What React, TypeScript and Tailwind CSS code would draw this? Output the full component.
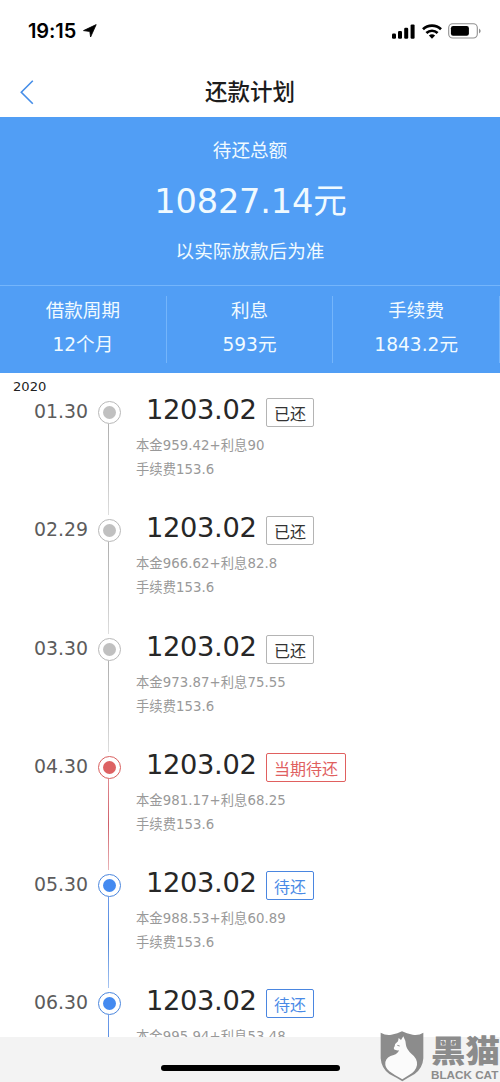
import clsx from 'clsx'

type Status = 'paid' | 'current' | 'pending'

interface Installment {
  date: string
  amount: string
  principal: string
  interest: string
  fee: string
  status: Status
}

const installments: Installment[] = [
  { date: '01.30', amount: '1203.02', principal: '959.42', interest: '90', fee: '153.6', status: 'paid' },
  { date: '02.29', amount: '1203.02', principal: '966.62', interest: '82.8', fee: '153.6', status: 'paid' },
  { date: '03.30', amount: '1203.02', principal: '973.87', interest: '75.55', fee: '153.6', status: 'paid' },
  { date: '04.30', amount: '1203.02', principal: '981.17', interest: '68.25', fee: '153.6', status: 'current' },
  { date: '05.30', amount: '1203.02', principal: '988.53', interest: '60.89', fee: '153.6', status: 'pending' },
  { date: '06.30', amount: '1203.02', principal: '995.94', interest: '53.48', fee: '153.6', status: 'pending' },
]

const summary = [
  { label: '借款周期', value: '12个月' },
  { label: '利息', value: '593元' },
  { label: '手续费', value: '1843.2元' },
]

const statusStyles = {
  paid: {
    label: '已还',
    tag: 'border-[#b4b4b4] text-[#333333]',
    ring: 'border-[#b8b8b8]',
    dot: 'bg-[#c0c0c0]',
    line: 'from-[#b0b0b0] via-[#c2c2c2] to-[#dedede]',
  },
  current: {
    label: '当期待还',
    tag: 'border-[#e0605f] text-[#e0605f]',
    ring: 'border-[#d9605f]',
    dot: 'bg-[#dd6263]',
    line: 'from-[#e08a90] via-[#cf5f6a] to-[#e9b5b9]',
  },
  pending: {
    label: '待还',
    tag: 'border-[#4a86e0] text-[#4a8ae6]',
    ring: 'border-[#4a86de]',
    dot: 'bg-[#448af0]',
    line: 'from-[#6d9bea] via-[#5089dc] to-[#a9c6f2]',
  },
}

function StatusBar() {
  return (
    <div className="flex h-[66px] items-start justify-between pl-[28px] pr-[19px] pt-[19px] text-black">
      <div className="flex h-6 items-center gap-[7px]">
        <span className="font-['Inter'] text-[20px] font-semibold leading-6 tracking-[-0.1px]">19:15</span>
        <svg width="14" height="14" viewBox="0 0 14 14" fill="currentColor" stroke="currentColor" strokeWidth="0.8" strokeLinejoin="round">
          <path d="M13.2 0.6 L7.6 13 L6.8 7.5 L0.5 6.6 Z" />
        </svg>
      </div>
      <div className="flex h-6 items-center">
        <svg width="23" height="15" viewBox="0 0 23 15" fill="currentColor">
          <rect x="0" y="9.5" width="4" height="5.2" rx="1.2" />
          <rect x="6" y="7" width="4" height="7.7" rx="1.2" />
          <rect x="12.2" y="3.7" width="4" height="11" rx="1.2" />
          <rect x="18.6" y="0.4" width="4" height="14.3" rx="1.2" />
        </svg>
        <svg className="ml-[7px]" width="20" height="15" viewBox="0 0 20 15" fill="none" stroke="currentColor" strokeWidth="2.7">
          <path d="M1 5.3 C6 0.5 14 0.5 19 5.3" />
          <path d="M4.4 9 C7.6 6 12.4 6 15.6 9" />
          <path d="M6.9 11.5 Q10 9 13.1 11.5 L10 14.7 Z" fill="currentColor" stroke="none" />
        </svg>
        <svg className="ml-[6px]" width="33" height="16" viewBox="0 0 33 16">
          <rect x="0.7" y="0.8" width="28.6" height="14.2" rx="4" fill="none" stroke="#8f8f8f" strokeWidth="1.1" />
          <rect x="2.9" y="3" width="18" height="9.8" rx="2.2" fill="currentColor" />
          <path d="M31 5.5 Q34.4 8 31 10.5 Z" fill="#8f8f8f" />
        </svg>
      </div>
    </div>
  )
}

function NavBar() {
  return (
    <div className="grid h-[51px] grid-cols-[1fr_auto_1fr] items-center">
      <svg className="ml-5" width="14" height="26" viewBox="0 0 14 26" fill="none" stroke="#468ee8" strokeWidth="1.6">
        <path d="M12.8 1.8 L1.3 13.2 L12.8 24.8" />
      </svg>
      <h1 className="pt-[2px] text-[22.5px] font-medium leading-[49px] text-[#1c1c1c]">还款计划</h1>
    </div>
  )
}

function SummaryPanel() {
  return (
    <section className="h-64 bg-[#519ef5] pt-4 text-center text-[18.6px] text-[#f0faff]">
      <p className="leading-9">待还总额</p>
      <p className="mt-[9px] pl-[1px] text-[33.6px] leading-[48px] tracking-[-0.15px]">10827.14元</p>
      <p className="mt-2 leading-9">以实际放款后为准</p>
      <div className="mt-[15px] grid grid-cols-3 border-t border-[#74b5fb] pt-[10px]">
        {summary.map((item) => (
          <div key={item.label} className="h-[67px] border-r border-[#74b5fb] leading-[34px]">
            <p className="-mt-[2px]">{item.label}</p>
            <p>{item.value}</p>
          </div>
        ))}
      </div>
    </section>
  )
}

function InstallmentRow({ item }: { item: Installment }) {
  const style = statusStyles[item.status]

  return (
    <li className="flex h-[118.3px]">
      <span className="w-[88px] text-right text-[18.9px] leading-[28px] text-[#5c5c5c]">{item.date}</span>
      <div className="ml-[10px] flex w-[23px] flex-col items-center pt-[4px]">
        <div className={clsx('flex size-[23px] shrink-0 items-center justify-center rounded-full border', style.ring)}>
          <div className={clsx('size-[13px] rounded-full', style.dot)} />
        </div>
        <div className={clsx('mr-[2px] h-[92px] w-[1.5px] bg-gradient-to-b', style.line)} />
      </div>
      <div className="ml-[15px]">
        <div className="flex items-start pl-[10px]">
          <span className="w-[120px] text-[27.3px] leading-[25px] tracking-[-0.35px] text-[#272727]">{item.amount}</span>
          <span className={clsx('mt-[1px] h-[29px] rounded-[2px] border px-[7px] pt-[1px] text-[16px] leading-[29px]', style.tag)}>
            {style.label}
          </span>
        </div>
        <div className="mt-[7px] text-[13.3px] leading-6 tracking-[0.05px] text-[#999999]">
          <p>本金{item.principal}+利息{item.interest}</p>
          <p>手续费{item.fee}</p>
        </div>
      </div>
    </li>
  )
}

function Watermark() {
  return (
    <div className="absolute bottom-0 right-0 flex h-[51px] w-[120px] text-[#8c8c8c]">
      <svg className="shrink-0" width="44" height="51" viewBox="0 0 132 153">
        <path
          d="M2 5 Q18 14 34 11 Q54 8 66 1 Q80 8 98 11 Q116 14 130 5 V82 Q128 112 104 129 Q84 140 67 151 Q50 140 28 129 Q4 112 2 82 Z"
          fill="currentColor"
        />
        <path
          d="M54 31 L56 21 L63 27 L70 16 Q77 28 78 43 Q80 56 94 68 Q113 82 111 102 Q108 121 86 133 L67 145 Q44 133 28 121 Q14 109 16 93 Q20 77 41 72 Q54 68 57 58 Q47 59 42 55 Q40 50 44 46 Q45 37 54 31 Z"
          fill="#fbfbfb"
        />
        <path d="M52 43 L59 45" stroke="currentColor" strokeWidth="3" />
      </svg>
      <div className="ml-[7px] flex flex-col">
        <span className="h-[35px] origin-center scale-y-90 whitespace-nowrap text-[34.5px] font-black leading-[41px]">黑猫</span>
        <span className="whitespace-nowrap font-['Liberation_Sans'] text-[11.7px] font-bold leading-[17px]">BLACK CAT</span>
      </div>
    </div>
  )
}

export default function App() {
  return (
    <div className="relative flex h-[1082px] w-[500px] flex-col overflow-hidden bg-white font-['DejaVu_Sans','Noto_Sans_CJK_SC',sans-serif]">
      <StatusBar />
      <NavBar />
      <SummaryPanel />
      <main className="min-h-0 flex-1 overflow-hidden">
        <p className="h-6 pl-[13px] text-[13.1px] leading-[27px] text-[#222222]">2020</p>
        <ul>
          {installments.map((item) => (
            <InstallmentRow key={item.date} item={item} />
          ))}
        </ul>
      </main>
      <footer className="flex h-[45px] shrink-0 justify-center bg-[#f3f3f3] pt-[28px]">
        <div className="h-[6px] w-[179px] rounded-full bg-black" />
      </footer>
      <Watermark />
    </div>
  )
}
